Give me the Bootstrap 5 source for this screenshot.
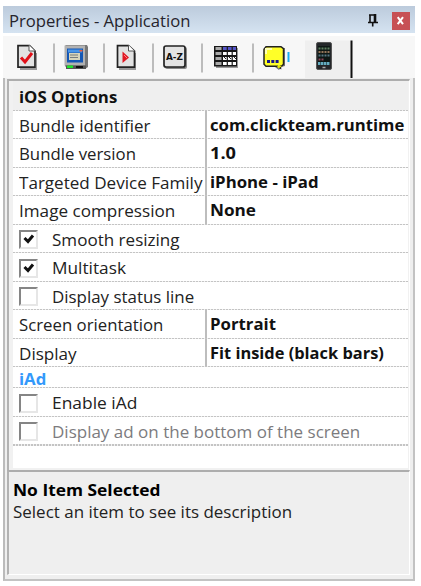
<!DOCTYPE html>
<html lang="en">
<head>
<meta charset="utf-8">
<meta name="viewport" content="width=device-width, initial-scale=1">
<title>Properties - Application</title>
<link href="https://cdn.jsdelivr.net/npm/bootstrap@5.3.0/dist/css/bootstrap.min.css" rel="stylesheet">
<style>
body{background:#fff;font:16.8px/28px "Open Sans","Noto Sans",sans-serif;color:#222;width:421px;height:586px;overflow:hidden;padding:6px 0 0 3px}
.win{width:412px;height:575px;background:#f7f7f7}
.titlebar{height:27px;background:linear-gradient(#bccbdc,#d5e3f1);font-size:16px;line-height:28px;padding:2px 5px 0 6px;color:#26242c}
.tools{height:45px;border-top:3px solid #fff;background:#f7f7f7}
.tool{height:42px;flex:none}
.tool svg{display:block}
.sep{stroke:#bcbcbc;stroke-width:2}
.frame{height:503px;border:2px solid #c3c3c3;border-top:0;border-left-color:#bbb;padding:1px 4px 4px 2px;background:#efefef}
.pane{width:403px;border-left:2px solid #b2b2b2;border-top:2px solid #adadad;border-right:1px solid #fff;background:#efefef}
.props{height:391px;padding:0 1px 1px 4px;background:#f1f1f1}
.info{height:105px;padding:7px 4px 0;border-bottom:1px solid #fff;line-height:22px}
.line{height:28.5px;background:#fff;position:relative;padding-left:6px}
.line.align-items-center{padding-top:1.5px}
.line::after{content:"";position:absolute;left:0;right:0;bottom:-1px;height:2px;background:repeating-linear-gradient(90deg,#c4c4c4 0 2px,#f0f0f0 2px 3px)}
.key{width:188px;padding-top:1.4px;border-right:2px solid #bdbdbd;height:28px}
.val{padding-left:3px;font-weight:700;color:#111}
.line.head{background:#efefef;height:29.5px;font-weight:700;color:#111;padding-top:2px}
.line.group-head{height:21px;line-height:23px;font-weight:700;color:#3399fb}
.box{width:19px;height:19px;border:2px solid;border-color:#858585 #e6e6e6 #e6e6e6 #858585;background:#fff;flex:none;margin-right:14px}
.box svg{display:block}
.off{color:#7c7b7e}
.t{white-space:pre;display:inline-block;transform-origin:0 50%}
.close-x{width:18px;height:18px;background:#c75055}
.pin{margin-right:13px}
.rest{height:23px}
</style>
<script src="https://cdn.jsdelivr.net/npm/bootstrap@5.3.0/dist/js/bootstrap.bundle.min.js"></script>
</head>
<body>
<div class="win d-flex flex-column">
<div class="titlebar d-flex align-items-center">
<span class="t me-auto" data-w="181">Properties - Application</span>
<svg class="pin" width="12" height="13" viewBox="0 0 12 13"><path d="M2 1h7M3 1v7M1 8.5h10M5.7 8v4.5" fill="none" stroke="#111" stroke-width="1.6"/><path d="M8 0v8" stroke="#111" stroke-width="2.6"/></svg>
<div class="close-x"><svg class="d-block" width="18" height="18"><path d="M5.7 5.2l5.3 7M11 5.2l-5.3 7" stroke="#fff" stroke-width="2"/></svg></div>
</div>
<div class="tools d-flex">
<div class="tool"><svg width="52" height="42" viewBox="3 36 52 42"><path d="M20 68h16v-15h1v17H20z" fill="#999"/><path d="M18 45.7h11.5l5.5 5.5v16H18z" fill="#e2e2e2" stroke="#222" stroke-width="1.7"/><path d="M29 45v6h6" fill="#fff" stroke="#555"/><path d="M21 57.5l4 4.5 7-9" fill="none" stroke="#e01018" stroke-width="3"/><path class="sep" d="M54 43.5v29"/></svg></div>
<div class="tool"><svg width="50" height="42" viewBox="55 36 50 42"><path d="M66 45h21l1 2v20l-3 2H68l-3-3V46z" fill="#777"/><path d="M64.5 45.5H85v20H64.5z" fill="#b2b2b2"/><path d="M67 48.5h16v14H67z" fill="#1557b4"/><path d="M68 49.5h14v3H68z" fill="#4995e8"/><path d="M79.5 50h3v1.5h-3z" fill="#ef5a35"/><path d="M69 53h11v7H69z" fill="#d8d5bb"/><path d="M70 55h8M70 57.5h8" stroke="#777c80"/><path d="M66 65.500h20v3.500H66z" fill="#555"/><path d="M67 65.500h6v2.500h-6z" fill="#20e42b"/><path d="M76 66h7v2h-7z" fill="#111"/><path class="sep" d="M104 43.500v29"/></svg></div>
<div class="tool"><svg width="49" height="42" viewBox="105 36 49 42"><path d="M119 68h16v-15h1v17h-17z" fill="#999"/><path d="M117.500 45.700h11l6 5.500v16h-17z" fill="#e2e2e2" stroke="#222" stroke-width="1.700"/><path d="M128.500 45v6h6" fill="#fff" stroke="#555"/><path d="M122.500 51.500v11.500l6.500-5.500z" fill="#e01722"/><path d="M124 55l3 3" stroke="#ff8585"/><path class="sep" d="M153 43.500v29"/></svg></div>
<div class="tool"><svg width="49" height="42" viewBox="154 36 49 42"><rect x="165" y="47" width="22" height="22" rx="2" fill="#888"/><rect x="164" y="46" width="21" height="21" rx="2" fill="#e3e3e3" stroke="#222" stroke-width="1.700"/><text x="166" y="60" font-family="DejaVu Sans" font-weight="700" font-size="9" textLength="17" lengthAdjust="spacingAndGlyphs" fill="#111">A-Z</text><path class="sep" d="M202 43.500v29"/></svg></div>
<div class="tool"><svg width="49" height="42" viewBox="203 36 49 42"><path d="M216 48h22v20h-22z" fill="#999"/><path d="M214 46h23v20.500h-23z" fill="#181818"/><path d="M215.500 48.500h6M215.500 53.500h6M215.500 58.500h6M215.500 63.500h6" stroke="#aaa" stroke-width="3"/><path d="M223 48.500h13" stroke="#5454c7" stroke-width="3" stroke-dasharray="3.700 1.200"/><path d="M223 53.500h13M223 58.500h13M223 63.500h13" stroke="#fff" stroke-width="3" stroke-dasharray="3.700 1.200"/><path d="M224 57l2 2M229 57l2 2M234 57l2 2" stroke="#222"/></svg></div>
<div class="tool"><svg width="53" height="42" viewBox="252 36 53 42"><path class="sep" d="M253 43.500v29"/><path d="M267 49l18-1v18l-4 1-2 3-4-3h-8z" fill="#777"/><path d="M266 46.700h15l2.500 2v15.500l-2 2h-1v2l-3-2H266l-2-2v-15z" fill="#ffff28" stroke="#222" stroke-width="1.500"/><path d="M266 54v-5h6" fill="none" stroke="#ffffb8" stroke-width="2"/><path d="M267 61.500h12" stroke="#17178b" stroke-width="3" stroke-dasharray="3 1.300"/><path d="M277 66h5l-3.500 2.500z" fill="#e7e900"/><path d="M288.500 52v10" stroke="#18aef0" stroke-width="2"/></svg></div>
<div class="tool"><svg width="50" height="42" viewBox="305 36 50 42"><path d="M304 40.500h47v38h-47z" fill="#efefef"/><path d="M351.500 40.500v37.500" stroke="#111" stroke-width="2"/><rect x="316.500" y="42.500" width="15" height="27" rx="1.500" fill="#24272a" stroke="#555"/><path d="M318 46h12v19h-12z" fill="#0d1714"/><path d="M318.500 48.500h11" stroke="#5f7f60" stroke-width="2" stroke-dasharray="2 1"/><path d="M318.500 52h11" stroke="#94765a" stroke-width="2" stroke-dasharray="2 1"/><path d="M318.500 55.500h11" stroke="#567783" stroke-width="2" stroke-dasharray="2 1"/><path d="M318.500 59.500h5" stroke="#8d4557" stroke-width="2" stroke-dasharray="2 1"/><path d="M318 63.500h12" stroke="#64acc0" stroke-width="3" stroke-dasharray="2.500 .5"/><path d="M322.500 67.500h3" stroke="#aaa" stroke-width="1.500"/></svg></div>
</div>
<div class="frame">
<div class="pane props">
<div class="line head"><span class="t" data-w="98">iOS Options</span></div>
<div class="line d-flex"><div class="key"><span class="t" data-w="131">Bundle identifier</span></div><div class="val"><span class="t" data-w="194">com.clickteam.runtime</span></div></div>
<div class="line d-flex"><div class="key"><span class="t" data-w="117">Bundle version</span></div><div class="val"><span class="t" data-w="26">1.0</span></div></div>
<div class="line d-flex"><div class="key"><span class="t" data-w="183">Targeted Device Family</span></div><div class="val"><span class="t" data-w="109">iPhone - iPad</span></div></div>
<div class="line d-flex"><div class="key"><span class="t" data-w="156">Image compression</span></div><div class="val"><span class="t" data-w="46">None</span></div></div>
<div class="line d-flex align-items-center"><div class="box"><svg width="15" height="15"><path d="M3.500 6l3.500 3.500 5-6" fill="none" stroke="#111" stroke-width="3"/></svg></div><span class="t" data-w="128">Smooth resizing</span></div>
<div class="line d-flex align-items-center"><div class="box"><svg width="15" height="15"><path d="M3.500 6l3.500 3.500 5-6" fill="none" stroke="#111" stroke-width="3"/></svg></div><span class="t" data-w="74">Multitask</span></div>
<div class="line d-flex align-items-center"><div class="box"></div><span class="t" data-w="142">Display status line</span></div>
<div class="line d-flex"><div class="key"><span class="t" data-w="144">Screen orientation</span></div><div class="val"><span class="t" data-w="66">Portrait</span></div></div>
<div class="line d-flex"><div class="key"><span class="t" data-w="58">Display</span></div><div class="val"><span class="t" data-w="174">Fit inside (black bars)</span></div></div>
<div class="line group-head"><span class="t" data-w="27">iAd</span></div>
<div class="line d-flex align-items-center"><div class="box"></div><span class="t" data-w="85">Enable iAd</span></div>
<div class="line d-flex align-items-center off"><div class="box"></div><span class="t" data-w="308">Display ad on the bottom of the screen</span></div>
<div class="rest bg-white"></div>
</div>
<div class="pane info">
<div class="fw-bold text-black"><span class="t" data-w="148">No Item Selected</span></div>
<div><span class="t" data-w="279">Select an item to see its description</span></div>
</div>
</div>
</div>
<script>
document.querySelectorAll('.t').forEach(function (el) {
  el.style.transform = 'scaleX(' + (el.dataset.w / el.offsetWidth) + ')';
});
</script>
</body>
</html>
